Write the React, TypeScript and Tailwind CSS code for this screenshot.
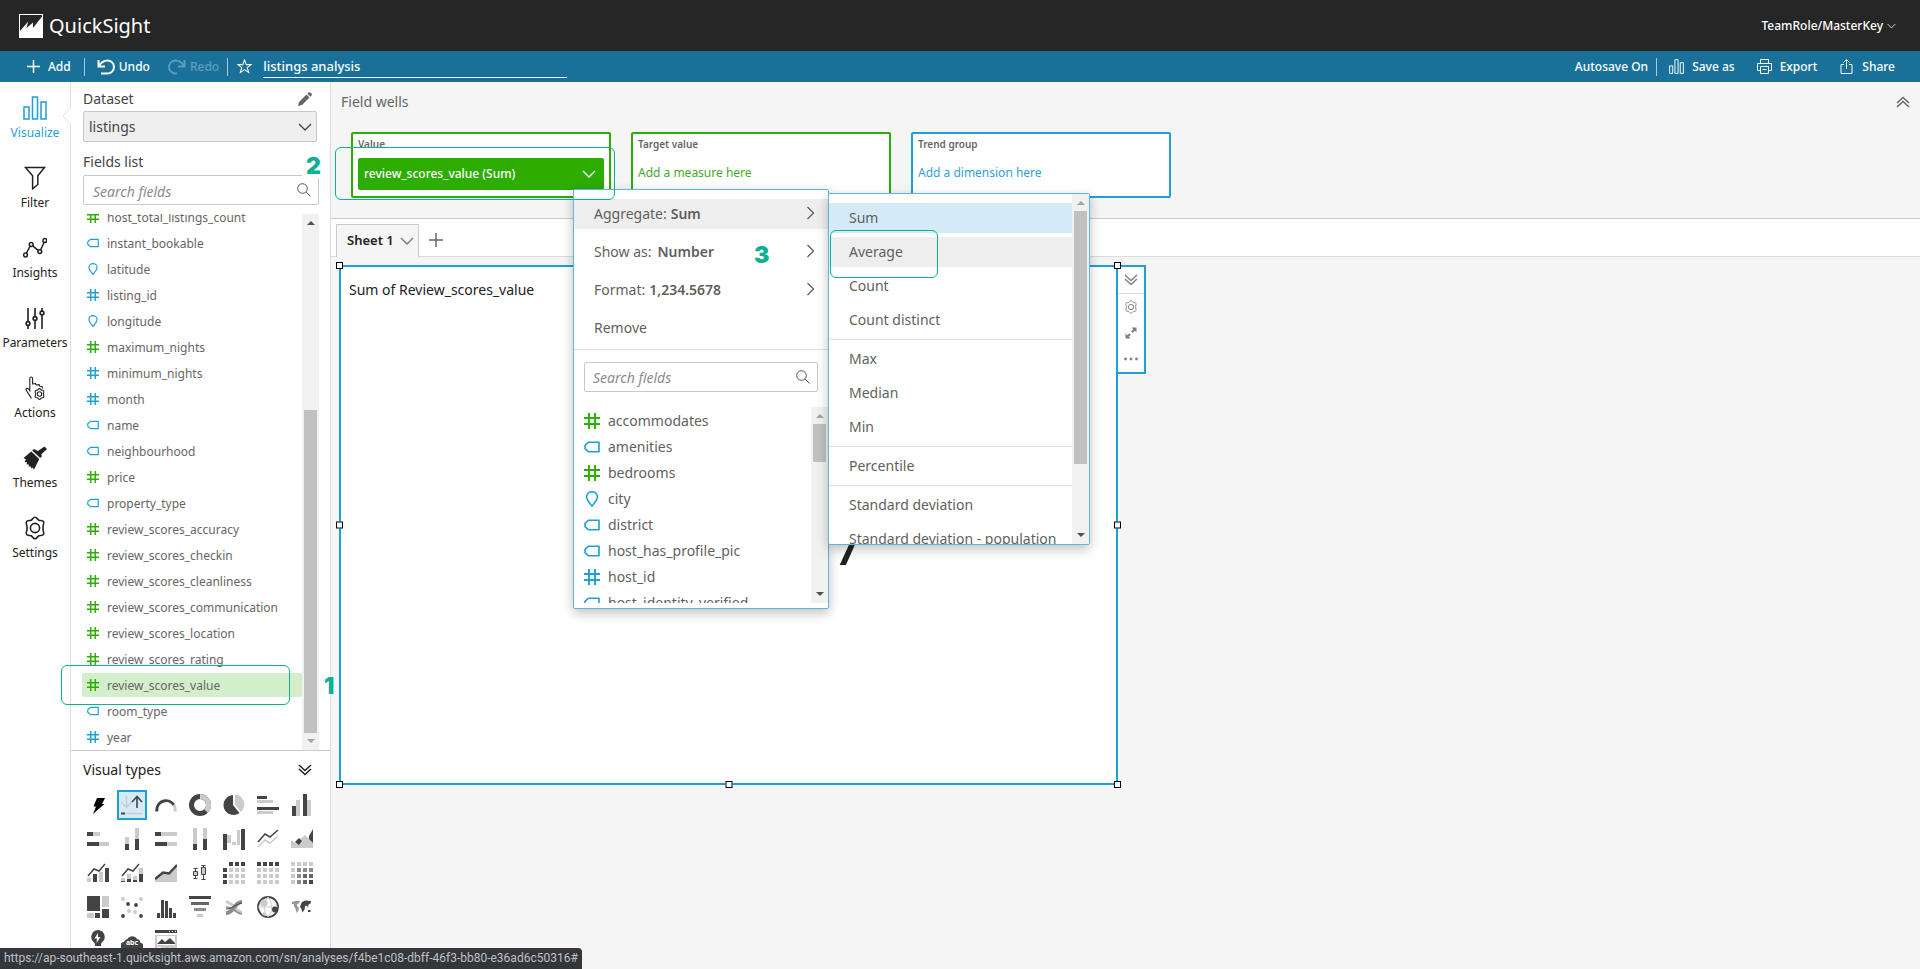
import React from 'react';

type FieldKind = 'measure' | 'number' | 'text' | 'geo';

interface Field {
  name: string;
  kind: FieldKind;
}

const fields: Field[] = [
  { name: 'host_total_listings_count', kind: 'measure' },
  { name: 'instant_bookable', kind: 'text' },
  { name: 'latitude', kind: 'geo' },
  { name: 'listing_id', kind: 'number' },
  { name: 'longitude', kind: 'geo' },
  { name: 'maximum_nights', kind: 'measure' },
  { name: 'minimum_nights', kind: 'number' },
  { name: 'month', kind: 'number' },
  { name: 'name', kind: 'text' },
  { name: 'neighbourhood', kind: 'text' },
  { name: 'price', kind: 'measure' },
  { name: 'property_type', kind: 'text' },
  { name: 'review_scores_accuracy', kind: 'measure' },
  { name: 'review_scores_checkin', kind: 'measure' },
  { name: 'review_scores_cleanliness', kind: 'measure' },
  { name: 'review_scores_communication', kind: 'measure' },
  { name: 'review_scores_location', kind: 'measure' },
  { name: 'review_scores_rating', kind: 'measure' },
  { name: 'review_scores_value', kind: 'measure' },
  { name: 'room_type', kind: 'text' },
  { name: 'year', kind: 'number' },
];

const menuFields: Field[] = [
  { name: 'accommodates', kind: 'measure' },
  { name: 'amenities', kind: 'text' },
  { name: 'bedrooms', kind: 'measure' },
  { name: 'city', kind: 'geo' },
  { name: 'district', kind: 'text' },
  { name: 'host_has_profile_pic', kind: 'text' },
  { name: 'host_id', kind: 'number' },
  { name: 'host_identity_verified', kind: 'text' },
];

const aggregates = [
  ['Sum', 'Average', 'Count', 'Count distinct'],
  ['Max', 'Median', 'Min'],
  ['Percentile'],
  ['Standard deviation', 'Standard deviation - population'],
];

const FieldIcon = ({ kind, className }: { kind: FieldKind; className: string }) => {
  if (kind === 'text') {
    return (
      <svg viewBox="0 0 16 16" className={`${className} text-[#1f9fd8]`} fill="none" stroke="currentColor" strokeWidth="1.6">
        <path d="M4.6 3.2H15v9.6H4.6L1 9.6V6.4z" strokeLinejoin="round" />
      </svg>
    );
  }
  if (kind === 'geo') {
    return (
      <svg viewBox="0 0 16 16" className={`${className} text-[#1f9fd8]`} fill="none" stroke="currentColor" strokeWidth="1.6">
        <path d="M8 15C5 11.5 2.6 8.8 2.6 5.9a5.4 5.2 0 0 1 10.8 0C13.4 8.8 11 11.5 8 15z" />
      </svg>
    );
  }
  return (
    <svg
      viewBox="0 0 16 16"
      className={`${className} ${kind === 'measure' ? 'text-[#2dad00]' : 'text-[#1f9fd8]'}`}
      fill="none"
      stroke="currentColor"
      strokeWidth="1.9"
    >
      <path d="M5 0v16M11 0v16M0 5h16M0 11h16" />
    </svg>
  );
};

const Chevron = ({ className }: { className: string }) => (
  <svg viewBox="0 0 14 8" className={className} fill="none" stroke="currentColor" strokeWidth="1.3">
    <path d="M1 1l6 6 6-6" />
  </svg>
);

const DoubleChevron = ({ className }: { className: string }) => (
  <svg viewBox="0 0 14 12" className={className} fill="none" stroke="currentColor" strokeWidth="1.5">
    <path d="M1 1l6 5.5L13 1M1 5l6 5.5L13 5" />
  </svg>
);

const SearchIcon = () => (
  <svg viewBox="0 0 14 14" className="h-[14px] w-[14px] shrink-0 text-[#555]" fill="none" stroke="currentColor">
    <circle cx="5.5" cy="5.5" r="4.8" />
    <path d="M9 9l4.5 4.5" />
  </svg>
);

const GearIcon = ({ className }: { className: string }) => (
  <svg viewBox="0 0 24 24" className={className} fill="none" stroke="currentColor" strokeWidth="1.6" strokeLinejoin="round">
    <path d="M12 1.3c1.8 0 2.5 2.2 3.9 2.9s3.7-.1 4.6 1.5c.9 1.5-.5 3.2-.5 4.8v3c0 1.6 1.4 3.3.5 4.8-.9 1.6-3.2.8-4.6 1.5s-2.1 2.900-3.900 2.900-2.500-2.200-3.900-2.900-3.700.1-4.600-1.500c-.9-1.500.5-3.200.5-4.800v-3c0-1.600-1.400-3.300-.5-4.800.9-1.600 3.200-.8 4.600-1.500S10.200 1.300 12 1.300z" />
    <circle cx="12" cy="12" r="4.6" />
  </svg>
);

const BarsIcon = ({ className }: { className: string }) => (
  <svg viewBox="0 0 24 24" className={className} fill="none" stroke="currentColor" strokeWidth="1.5">
    <path d="M1 11h5v12H1zM9.5 1h5v22h-5zM18 6h5v17h-5z" />
  </svg>
);

const railItems = [
  { label: 'Visualize', icon: <BarsIcon className="h-6 w-6" /> },
  {
    label: 'Filter',
    icon: (
      <svg viewBox="0 0 24 24" className="h-6 w-6" fill="none" stroke="currentColor" strokeWidth="1.5">
        <path d="M2.5 1.5h19l-6.7 8.3v8.7L9.6 22.8v-13z" />
      </svg>
    ),
  },
  {
    label: 'Insights',
    icon: (
      <svg viewBox="0 0 24 24" className="h-6 w-6" fill="none" stroke="currentColor" strokeWidth="1.5">
        <path d="M3.4 17.2L7.2 10M9.7 9.8l5.5 4.6M17.6 14l3.5-7.8" />
        <circle cx="2.5" cy="19" r="1.9" />
        <circle cx="8.2" cy="8.5" r="1.9" />
        <circle cx="16.8" cy="15.6" r="1.9" />
        <circle cx="21.8" cy="4.5" r="1.9" />
      </svg>
    ),
  },
  {
    label: 'Parameters',
    icon: (
      <svg viewBox="0 0 24 24" className="h-6 w-6" fill="none" stroke="currentColor" strokeWidth="1.6">
        <path d="M5 2v13.5M5 19.5V23M12 2v8.5M12 14.5V23M19 2v3M19 9v14" />
        <circle cx="5" cy="17.5" r="1.9" />
        <circle cx="12" cy="12.5" r="1.9" />
        <circle cx="19" cy="7" r="1.9" />
      </svg>
    ),
  },
  {
    label: 'Actions',
    icon: (
      <svg viewBox="0 0 24 24" className="h-6 w-6" fill="none" stroke="currentColor" strokeWidth="1.1">
        <path d="M8.5 22.5C6.5 19 4 16 3 13.5c0-1.2 1.6-1.7 2.6-.5l1.2 1.7V2.5c0-2 2.8-2 2.8 0v6M9.6 8l3-.5.5 1.5 3-.3.6 1.5 2.3.3.5 2" />
        <g transform="translate(10.5 12) scale(.5)" strokeWidth="2.2">
          <path d="M12 1.3c1.8 0 2.5 2.2 3.9 2.9s3.7-.1 4.6 1.5c.9 1.5-.5 3.2-.5 4.8v3c0 1.6 1.4 3.3.5 4.8-.9 1.6-3.2.8-4.6 1.5s-2.1 2.900-3.900 2.900-2.500-2.200-3.900-2.900-3.700.1-4.600-1.500c-.9-1.500.5-3.200.5-4.800v-3c0-1.600-1.400-3.300-.5-4.800.9-1.600 3.200-.8 4.600-1.500S10.200 1.300 12 1.300z" />
          <circle cx="12" cy="12" r="4.5" />
        </g>
      </svg>
    ),
  },
  {
    label: 'Themes',
    icon: (
      <svg viewBox="0 0 24 24" className="h-6 w-6" fill="currentColor">
        <path d="M21.5.5L24 3l-5.8 5.5.8 1.8-1.8 1.7-8-7.5L11 3l2 .9 1.9 1.2zM8.3 5.5l8 7.5L11 23.500l-1.600-2-1 1-.9-2.300-1.800.6.1-2.400-2.300-.1.5-2L1.500 16 3 13.500.5 12z" />
      </svg>
    ),
  },
  { label: 'Settings', icon: <GearIcon className="h-6 w-6" /> },
];

const D = '#444444';
const M = '#8c8c8c';
const L = '#cbcbcb';

type Bar = [number, number, number, number, string];

const Bars = ({ bars }: { bars: Bar[] }) => (
  <>
    {bars.map(([x, y, w, h, fill], i) => (
      <rect key={i} x={x} y={y} width={w} height={h} fill={fill} />
    ))}
  </>
);

const Cells = ({ rows }: { rows: string[] }) => {
  const shades: Record<string, string> = { d: D, k: '#666666', m: M, l: L, x: 'none' };
  return (
    <>
      {rows.map((row, y) =>
        row.split('').map((c, x) => (
          <rect key={`${x}-${y}`} x={x * 6} y={y * 6} width="4" height="4" fill={shades[c]} />
        ))
      )}
    </>
  );
};

const visualTypes: { label: string; art: React.ReactNode }[] = [
  { label: 'AutoGraph', art: <path d="M10 4h8l-3 6h2.5L6 20l3-7.5H6.5z" fill="#000" /> },
  {
    label: 'KPI',
    art: (
      <g fill="none">
        <path d="M5.5 2v11M.5 8l5 5.5 5-5.5" stroke={L} strokeWidth="1.5" />
        <path d="M16 14V3M11 8l5-5.5L21 8" stroke={D} strokeWidth="1.6" />
        <path d="M4 19.5h18" stroke={L} strokeWidth="1.5" />
        <path d="M0 19.5h4" stroke={D} strokeWidth="2" />
      </g>
    ),
  },
  {
    label: 'Gauge chart',
    art: (
      <g fill="none" strokeWidth="3">
        <path d="M1.8 17.5v-2a9.2 9.2 0 0 1 17-4.5" stroke={D} />
        <path d="M18.8 11a9 9 0 0 1 1.4 4.5v2" stroke={L} />
      </g>
    ),
  },
  {
    label: 'Donut chart',
    art: (
      <g fill="none" strokeWidth="5">
        <circle cx="11" cy="11" r="8.5" stroke={D} />
        <path d="M11 2.5a8.5 8.5 0 0 1 6 14.5" stroke={L} />
      </g>
    ),
  },
  {
    label: 'Pie chart',
    art: (
      <>
        <path d="M10 1a10 10 0 1 0 6.5 18L10 11z" fill={D} />
        <path d="M12 .5a10 10 0 0 1 5.8 17.5L12 10.5z" fill={L} />
      </>
    ),
  },
  { label: 'Horizontal bar chart', art: <Bars bars={[[0, 2, 10, 3, D], [0, 6, 16, 3, L], [0, 13, 22, 3, D], [0, 17, 16, 3, L]]} /> },
  { label: 'Vertical bar chart', art: <Bars bars={[[1, 12, 4, 10, D], [5, 6, 4, 16, L], [12, 0, 4, 22, D], [16, 6, 4, 16, L]]} /> },
  { label: 'Horizontal stacked bar chart', art: <Bars bars={[[0, 4, 6, 4, D], [6, 4, 7, 4, L], [0, 14, 12, 4, D], [12, 14, 10, 4, L]]} /> },
  { label: 'Vertical stacked bar chart', art: <Bars bars={[[4, 9, 4, 7, L], [4, 16, 4, 6, D], [14, 0, 4, 11, L], [14, 11, 4, 11, D]]} /> },
  { label: 'Horizontal stacked 100% bar chart', art: <Bars bars={[[0, 4, 6, 4, D], [6, 4, 16, 4, L], [0, 14, 12, 4, D], [12, 14, 10, 4, L]]} /> },
  { label: 'Vertical stacked 100% bar chart', art: <Bars bars={[[4, 0, 4, 16, L], [4, 16, 4, 6, D], [14, 0, 4, 11, L], [14, 11, 4, 11, D]]} /> },
  { label: 'Waterfall chart', art: <Bars bars={[[0, 6, 4, 16, D], [4, 7, 4, 8, L], [9, 14, 4, 3, L], [14, 2, 3, 15, L], [18, 1, 4, 21, D]]} /> },
  {
    label: 'Line chart',
    art: (
      <g fill="none" strokeWidth="1.5">
        <path d="M1 14l7-8 5 3 8-7" stroke={D} />
        <path d="M1 19l7-7 5 3 8-7" stroke={L} />
      </g>
    ),
  },
  {
    label: 'Area line chart',
    art: (
      <>
        <path d="M0 20v-8l4 3 4-3 6-5 4 4 4 2v7z" fill={L} />
        <path d="M4 14l4-4 3 3-3 4zM22 1l-4 7v3l4 4z" fill={D} />
      </>
    ),
  },
  {
    label: 'Clustered bar combo chart',
    art: (
      <>
        <Bars bars={[[0, 16, 4, 4, L], [6, 12, 4, 8, D], [12, 10, 4, 10, L], [18, 6, 4, 14, D]]} />
        <path d="M1 14l6-7 5 2 6-7" fill="none" stroke={D} strokeWidth="1.5" />
      </>
    ),
  },
  {
    label: 'Stacked bar combo chart',
    art: (
      <>
        <Bars bars={[[0, 16, 4, 3, L], [0, 19, 4, 1, D], [6, 12, 4, 5, L], [6, 17, 4, 3, D], [12, 14, 4, 4, L], [12, 18, 4, 2, D], [18, 6, 4, 7, L], [18, 12, 4, 8, D]]} />
        <path d="M1 14l6-7 5 2 6-7" fill="none" stroke={D} strokeWidth="1.5" />
      </>
    ),
  },
  {
    label: 'Stacked area line chart',
    art: (
      <>
        <path d="M0 20v-3l7-6 7 1 8-8v16z" fill={L} />
        <path d="M0 17l8-6.5 6 1L22 3" fill="none" stroke={D} strokeWidth="2.5" />
      </>
    ),
  },
  {
    label: 'Box plot',
    art: (
      <g fill={L} stroke={D} strokeWidth="1">
        <path d="M6.5 6v11M14.5 3v15M4.5 6.5h4M4.5 16.5h4M12.5 3.5h4M12.5 17.5h4" />
        <path d="M4.5 9.5h4v4h-4zM12.5 5.5h4v7h-4z" />
      </g>
    ),
  },
  { label: 'Pivot table', art: <Cells rows={['xddd', 'dlll', 'dlll', 'dlll']} /> },
  { label: 'Table', art: <Cells rows={['dddd', 'llll', 'llll', 'llll']} /> },
  { label: 'Heat map', art: <Cells rows={['llll', 'lmmm', 'lmkk', 'lmkd']} /> },
  { label: 'Tree map', art: <Bars bars={[[0, 0, 13, 15, D], [15, 0, 7, 11, L], [0, 17, 7, 5, L], [8, 17, 5, 5, D], [15, 13, 7, 9, D]]} /> },
  {
    label: 'Scatter plot',
    art: (
      <>
        {[[2, 3], [20, 3], [8, 15], [14, 16]].map(([x, y]) => (
          <circle key={`${x}-${y}`} cx={x} cy={y} r="1.9" fill={L} />
        ))}
        {[[7, 8], [15, 9], [2, 20], [20, 20]].map(([x, y]) => (
          <circle key={`${x}-${y}`} cx={x} cy={y} r="1.9" fill={D} />
        ))}
      </>
    ),
  },
  { label: 'Histogram', art: <Bars bars={[[2, 17, 3, 5, D], [6, 4, 3, 18, D], [10, 5, 3, 17, D], [14, 12, 3, 10, D], [18, 17, 3, 5, D]]} /> },
  { label: 'Funnel chart', art: <Bars bars={[[0, 0, 22, 3, D], [2, 6, 18, 3, '#666666'], [5, 12, 12, 3, M], [8, 18, 6, 3, L]]} /> },
  {
    label: 'Sankey diagram',
    art: (
      <g fill="none">
        <path d="M3 6c8 0 8 10 16 10" stroke={L} strokeWidth="3" />
        <path d="M3 11c8 0 8 6 16 7" stroke={M} strokeWidth="1.5" />
        <path d="M3 17C11 17 11 6 19 6" stroke={M} strokeWidth="4" />
        <path d="M3 13c7 0 9-5 16-6" stroke={D} strokeWidth="1" />
      </g>
    ),
  },
  {
    label: 'Points on map',
    art: (
      <>
        <circle cx="11" cy="11" r="10" fill="none" stroke={D} strokeWidth="1.8" />
        <path d="M1 11h20M11 1c-5 6-5 14 0 20M11 1c5 6 5 14 0 20" fill="none" stroke={L} strokeWidth="1" />
        <circle cx="7" cy="7" r="3.6" fill={L} />
        <circle cx="7" cy="18" r="1.7" fill={L} />
        <circle cx="18" cy="13.5" r="3" fill={D} />
      </>
    ),
  },
  {
    label: 'Filled map',
    art: (
      <>
        <path d="M1 6l3-1h5l-1 2-2 1.5V10l2 1.5-.5 3-2 2.5-1-4.5-1.5-2V8L1 8z" fill="#999" />
        <path d="M10 8l1-2 3-1.5 6 .5-.5 2.5-2 1-.5 2.5-2-1.5-1 1-.5 3-2 3-1-3.5L9 11zM17 14h2.5v2H17z" fill={D} />
      </>
    ),
  },
  {
    label: 'Insight',
    art: (
      <>
        <path d="M11 0a7 7 0 0 0-4 12.5c.8.7 1 1.5 1 3.5h6c0-2 .2-2.8 1-3.5A7 7 0 0 0 11 0z" fill={D} />
        <path d="M11 3L7.5 8.500H10L9.500 13l4-6H11z" fill="#fff" />
      </>
    ),
  },
  {
    label: 'Word cloud',
    art: (
      <>
        <path d="M4 20a4 4 0 0 1-1-8 4 4 0 0 1 3.5-3A5.5 5.5 0 0 1 16 9a4.5 4.5 0 0 1 3.5 4A3.5 3.5 0 0 1 19 20z" fill={D} />
        <text x="11" y="15" fontSize="7" fontWeight="700" textAnchor="middle" fill="#fff">abc</text>
      </>
    ),
  },
  {
    label: 'Custom visual content',
    art: (
      <>
        <Bars bars={[[0, 0, 22, 3, D], [0, 5, 22, 17, L], [2, 6, 18, 9, '#ffffff'], [2, 17, 4, 3, '#ffffff'], [14, 1, 1, 1, '#ffffff'], [17, 1, 1, 1, '#ffffff'], [20, 1, 1, 1, '#ffffff']]} />
        <path d="M2 14l5-5 3 3 5-4 5 5v1z" fill={D} />
      </>
    ),
  },
];

const Scrollbar = ({ thumb, upActive }: { thumb: string; upActive?: boolean }) => (
  <div className="relative flex w-[17px] shrink-0 flex-col items-center justify-between bg-[#f1f1f1] py-[7px]">
    <svg viewBox="0 0 8 4" className={upActive ? 'h-1 w-2 fill-[#505050]' : 'h-1 w-2 fill-[#a3a3a3]'}>
      <path d="M0 4l4-4 4 4z" />
    </svg>
    <div className={`absolute left-[2px] w-[13px] bg-[#c1c1c1] ${thumb}`} />
    <svg viewBox="0 0 8 4" className={upActive ? 'h-1 w-2 fill-[#a3a3a3]' : 'h-1 w-2 fill-[#505050]'}>
      <path d="M0 0l4 4 4-4z" />
    </svg>
  </div>
);

const Header = () => (
  <header className="flex h-[51px] items-center justify-between bg-[#262626] pl-[19px] pr-6 text-white">
    <div className="flex items-center gap-[6px]">
      <svg viewBox="0 0 24 24" className="h-6 w-6">
        <path d="M0 0h24v24H0z" fill="#fff" />
        <path d="M1 1h22v1.5L14 14V8.5L7.5 14l1.7-6.5L1 17z" fill="#262626" />
      </svg>
      <span className="text-[20px] leading-6">QuickSight</span>
    </div>
    <button className="flex items-center gap-1 text-[12px] font-medium">
      TeamRole/MasterKey
      <Chevron className="h-[6px] w-[9px]" />
    </button>
  </header>
);

const Toolbar = () => (
  <div className="flex h-[31px] items-center justify-between bg-[#19719a] pl-[27px] pr-[25px] text-[12px] font-medium text-white">
    <div className="flex items-center">
      <button className="flex items-center gap-2">
        <svg viewBox="0 0 13 13" className="h-[13px] w-[13px]" stroke="currentColor" strokeWidth="1.5">
          <path d="M6.5 0v13M0 6.5h13" />
        </svg>
        Add
      </button>
      <div className="ml-[13px] mr-3 h-[18px] w-px bg-[#a9c9d9]" />
      <button className="flex items-center gap-1">
        <svg viewBox="0 0 18 16" className="h-4 w-[18px]" fill="none" stroke="currentColor" strokeWidth="2">
          <path d="M1.5 1v6.5H8M2 7C4 3.5 7 1.5 10.5 1.5a6.5 6.5 0 1 1 0 13H4" />
        </svg>
        Undo
      </button>
      <button className="ml-[18px] flex items-center gap-1 opacity-30" disabled>
        <svg viewBox="0 0 18 16" className="h-4 w-[18px]" fill="none" stroke="currentColor" strokeWidth="2">
          <path d="M16.5 1v6.5H10M16 7C14 3.5 11 1.5 7.5 1.5a6.5 6.5 0 1 0 0 13H9" />
        </svg>
        Redo
      </button>
      <div className="ml-2 mr-[9px] h-[18px] w-px bg-[#a9c9d9]" />
      <button aria-label="Add to favorites">
        <svg viewBox="0 0 16 16" className="h-[15px] w-[15px]" fill="none" stroke="currentColor" strokeWidth="1.1">
          <path d="M8 1l1.9 5H15l-4.1 3.2 1.6 5.3L8 11.4l-4.5 3.1 1.6-5.3L1 6h5.1z" />
        </svg>
      </button>
      <input
        aria-label="Analysis name"
        defaultValue="listings analysis"
        className="ml-[11px] h-[22px] w-[304px] border-b border-white bg-transparent text-[13px] font-medium outline-none"
      />
    </div>
    <div className="flex items-center">
      <span>Autosave On</span>
      <div className="ml-2 mr-3 h-[18px] w-px bg-[#a9c9d9]" />
      <button className="flex items-center gap-2">
        <BarsIcon className="h-[15px] w-[15px]" />
        Save as
      </button>
      <button className="ml-[22px] flex items-center gap-2">
        <svg viewBox="0 0 15 15" className="h-[15px] w-[15px]" fill="none" stroke="currentColor">
          <path d="M3.5 4V.5h8V4M3.5 11.5h-3v-7h14v7h-3M3.5 7.5h8v7h-8zM5.5 10.5h4" />
        </svg>
        Export
      </button>
      <button className="ml-[22px] flex items-center gap-2">
        <svg viewBox="0 0 15 15" className="h-[15px] w-[15px]" fill="none" stroke="currentColor">
          <path d="M5 5.5H2v9h11v-9h-3M7.5 10V1M4.5 3.5l3-3 3 3" />
        </svg>
        Share
      </button>
    </div>
  </div>
);

const Rail = () => (
  <nav className="relative w-[71px] shrink-0 border-r border-[#e0e0e0] bg-white">
    {railItems.map((item, i) => (
      <button
        key={item.label}
        className={`flex h-[70px] w-full flex-col items-center gap-[5px] pt-[14px] text-[12px] leading-[16px] ${
          i === 0 ? 'text-[#1f9fd8]' : 'text-[#222]'
        }`}
      >
        {item.icon}
        {item.label}
      </button>
    ))}
    {/* notch that points at the selected section */}
    <svg viewBox="0 0 9 18" className="absolute -right-px top-[25px] h-[18px] w-[9px]">
      <path d="M9 0L1 9l8 9z" fill="#fff" />
      <path d="M8.5.5L1 9l7.5 8.5" fill="none" stroke="#e0e0e0" />
    </svg>
  </nav>
);

const SidePanel = () => (
  <aside className="flex w-[260px] shrink-0 flex-col border-r border-[#ddd] bg-white">
    <div className="px-3 pt-[6px]">
      <div className="flex items-center justify-between text-[14px] leading-[22px] text-[#444]">
        <label htmlFor="dataset">Dataset</label>
        <button aria-label="Edit dataset" className="mr-[6px]">
          <svg viewBox="0 0 14 14" className="h-[14px] w-[14px]" fill="#666">
            <path d="M0 14l1-4 7.5-7.5 3 3L4 13zM9.3 1.7L10.5.5Q11.5-.3 13 1t.5 2.5L12.3 4.7z" />
          </svg>
        </button>
      </div>
      <div className="relative mt-px w-[234px]">
        <select
          id="dataset"
          className="h-[31px] w-full appearance-none rounded-xs border border-[#c8c8c8] bg-[#eee] pl-[5px] text-[14px] text-[#444]"
        >
          <option>listings</option>
        </select>
        <Chevron className="pointer-events-none absolute right-[5px] top-[12px] h-2 w-[14px] text-[#444]" />
      </div>
      <label htmlFor="field-search" className="mt-[9px] block text-[14px] leading-[22px] text-[#444]">
        Fields list
      </label>
      <div className="mt-[2px] flex h-[30px] w-[236px] items-center rounded-xs border border-[#c8c8c8] pr-[7px] pl-[9px]">
        <input
          id="field-search"
          placeholder="Search fields"
          className="min-w-0 flex-1 pt-[2px] text-[14px] italic outline-none placeholder:text-[#8c8c8c]"
        />
        <SearchIcon />
      </div>
    </div>
    <div className="mt-[9px] flex min-h-0 flex-1 border-b border-[#ccc] pr-[11px] pl-[11px]">
      <ul className="flex min-w-0 flex-1 flex-col justify-end overflow-hidden">
        {fields.map((field) => (
          <li
            key={field.name}
            className={`my-px flex h-6 shrink-0 items-center gap-2 rounded-xs pl-[5px] text-[12px] text-[#666] ${
              field.name === 'review_scores_value' ? 'bg-[#d3eecb]' : ''
            }`}
          >
            <FieldIcon kind={field.kind} className="h-3 w-3" />
            <span className="pt-[2px]">{field.name}</span>
          </li>
        ))}
      </ul>
      <Scrollbar thumb="top-[196px] bottom-[17px]" upActive />
    </div>
    <div className="h-[218px] shrink-0 overflow-hidden px-[10px]">
      <div className="flex h-[37px] items-center justify-between pr-2 pl-[2px] text-[14px] text-[#222]">
        Visual types
        <button aria-label="Collapse visual types">
          <DoubleChevron className="h-3 w-[14px]" />
        </button>
      </div>
      <div className="grid w-[238px] grid-cols-7">
        {visualTypes.map((v) => (
          <button
            key={v.label}
            aria-label={v.label}
            className={`m-[2px] flex h-[30px] w-[30px] items-center justify-center ${
              v.label === 'KPI' ? 'border-2 border-[#1f9fd8] bg-[#d4ebf7]' : ''
            }`}
          >
            <svg viewBox="0 0 22 22" className="h-[22px] w-[22px] shrink-0">
              {v.art}
            </svg>
          </button>
        ))}
      </div>
    </div>
  </aside>
);

const AggregateMenu = () => (
  <div className="absolute left-[254px] top-[3px] z-10 flex h-[352px] w-[262px] rounded-xs border border-[#5db5e0] bg-white shadow-[0_4px_12px_rgba(0,0,0,0.25)]">
    <div className="min-w-0 flex-1 overflow-hidden pt-[9px]">
      {aggregates.map((group, i) => (
        <div key={group[0]} className={`flex flex-col gap-1 ${i > 0 ? 'mt-1 border-t border-[#e0e0e0] pt-1' : ''}`}>
          {group.map((name) => (
            <button
              key={name}
              className={`h-[30px] shrink-0 pb-[2px] pl-5 text-left whitespace-nowrap ${
                name === 'Sum' ? 'bg-[#d4ebf7]' : name === 'Average' ? 'bg-[#eee]' : ''
              }`}
            >
              {name}
            </button>
          ))}
        </div>
      ))}
    </div>
    <Scrollbar thumb="top-[17px] h-[253px]" />
  </div>
);

const menuRows = [
  { label: 'Aggregate:', value: 'Sum', gap: 'gap-1' },
  { label: 'Show as:', value: 'Number', gap: 'gap-[6px]' },
  { label: 'Format:', value: '1,234.5678', gap: 'gap-1' },
];

const FieldMenu = () => (
  <div className="absolute left-[220px] top-[55px] z-20 flex h-[420px] w-[256px] flex-col rounded-xs border border-[#5db5e0] bg-white pt-[9px] text-[14px] text-[#5f5f5f] shadow-[0_4px_12px_rgba(0,0,0,0.25)]">
    <div className="flex flex-col gap-2 border-b border-[#e0e0e0] pb-[6px]">
      {menuRows.map((row, i) => (
        <button
          key={row.label}
          className={`flex h-[30px] items-center justify-between pr-[14px] pb-[2px] pl-5 ${i === 0 ? 'bg-[#eee]' : ''}`}
        >
          <span className={`flex ${row.gap}`}>
            {row.label} <b className="font-semibold">{row.value}</b>
          </span>
          <svg viewBox="0 0 7 14" className="h-[14px] w-[7px]" fill="none" stroke="currentColor" strokeWidth="1.3">
            <path d="M.5 1l6 6-6 6" />
          </svg>
        </button>
      ))}
      <button className="h-[30px] pb-[2px] pl-5 text-left">Remove</button>
    </div>
    <div className="mx-[10px] mt-3 flex h-[30px] shrink-0 items-center rounded-xs border border-[#c8c8c8] pr-[7px] pl-2">
      <input
        aria-label="Search fields"
        placeholder="Search fields"
        className="min-w-0 flex-1 text-[14px] italic outline-none placeholder:text-[#8c8c8c]"
      />
      <SearchIcon />
    </div>
    <div className="mt-[15px] mb-[5px] flex min-h-0 flex-1">
      <ul className="min-w-0 flex-1 overflow-hidden pl-[10px]">
        {menuFields.map((field) => (
          <li key={field.name} className="flex h-[26px] items-center gap-2 pt-[2px]">
            <FieldIcon kind={field.kind} className="h-4 w-4" />
            <span className="pb-[2px]">{field.name}</span>
          </li>
        ))}
      </ul>
      <Scrollbar thumb="top-[17px] h-[38px]" />
    </div>
    <AggregateMenu />
  </div>
);

const Handle = ({ className }: { className: string }) => (
  <span className={`absolute h-[7px] w-[7px] border border-black bg-white ${className}`} />
);

const FieldWells = () => (
  <section className="h-[137px] shrink-0 border-b border-[#ccc]">
    <div className="flex items-center justify-between pt-[9px] pr-[10px] pl-[10px] text-[14px] leading-[22px] text-[#666]">
      Field wells
      <button aria-label="Collapse field wells">
        <DoubleChevron className="h-3 w-[14px] rotate-180" />
      </button>
    </div>
    <div className="mt-[19px] flex gap-5 pl-5 text-[12px]">
      <div className="relative h-[66px] w-[260px] rounded-xs border-2 border-[#2dad00] bg-white px-[5px] pt-[3px]">
        <div className="text-[10px] leading-[14px] font-semibold text-[#666]">Value</div>
        <button className="mt-[7px] flex h-8 w-full items-center justify-between rounded-xs bg-[#2dad00] pr-2 pl-[6px] font-medium text-white">
          review_scores_value (Sum)
          <Chevron className="h-2 w-[14px]" />
        </button>
        <FieldMenu />
      </div>
      <div className="h-[66px] w-[260px] rounded-xs border-2 border-[#2dad00] bg-white px-[5px] pt-[3px]">
        <div className="text-[10px] leading-[14px] font-semibold text-[#666]">Target value</div>
        <div className="mt-[13px] leading-[18px] text-[#45a82a]">Add a measure here</div>
      </div>
      <div className="h-[66px] w-[260px] rounded-xs border-2 border-[#1f9fd8] bg-white px-[5px] pt-[3px]">
        <div className="text-[10px] leading-[14px] font-semibold text-[#666]">Trend group</div>
        <div className="mt-[13px] leading-[18px] text-[#2f9fd6]">Add a dimension here</div>
      </div>
    </div>
  </section>
);

const Sheet = () => (
  <section>
    <div className="flex h-[38px] items-end border-b border-[#ddd] bg-white pl-[5px]">
      <button className="-mb-px flex h-[33px] w-[83px] items-center justify-between border border-b-0 border-[#ccc] bg-[#f5f5f5] pr-1 pl-[10px] text-[13px] font-semibold text-[#222]">
        Sheet 1
        <Chevron className="h-2 w-[14px] text-[#777]" />
      </button>
      <button aria-label="Add sheet" className="mb-[9px] ml-[10px]">
        <svg viewBox="0 0 14 14" className="h-[14px] w-[14px]" stroke="#666" strokeWidth="1.5">
          <path d="M7 0v14M0 7h14" />
        </svg>
      </button>
    </div>
    <div className="flex items-start pt-2 pl-2">
      <div className="relative h-[520px] w-[779px] border-2 border-[#1f9fd8] bg-white pt-[12px] pl-2">
        <h2 className="text-[14px] leading-[22px] text-[#222]">Sum of Review_scores_value</h2>
        <p className="mt-[205px] pl-[482px] text-[64px] leading-[70px] text-[#222]">7</p>
        <Handle className="-left-[5px] -top-[5px]" />
        <Handle className="-left-[5px] top-1/2 -translate-y-1/2" />
        <Handle className="-left-[5px] -bottom-[5px]" />
        <Handle className="-right-[5px] -top-[5px]" />
        <Handle className="-right-[5px] top-1/2 -translate-y-1/2" />
        <Handle className="-right-[5px] -bottom-[5px]" />
        <Handle className="-bottom-[5px] left-1/2 -translate-x-1/2" />
      </div>
      <div className="flex w-[28px] flex-col items-center border-2 border-l-0 border-[#1f9fd8] bg-white text-[#808080]">
        <button aria-label="Collapse" className="flex h-[27px] w-full items-center justify-center border-b border-[#ddd]">
          <DoubleChevron className="h-3 w-[14px]" />
        </button>
        <button aria-label="Format visual" className="flex h-[26px] items-center">
          <GearIcon className="h-[14px] w-[14px]" />
        </button>
        <button aria-label="Maximize" className="flex h-[26px] items-center">
          <svg viewBox="0 0 12 12" className="h-3 w-3" fill="currentColor">
            <path d="M6.5.5h5v5L9.8 3.8 7.7 6 6.2 4.5l2-2.200zM.5 6.500v5h5L3.800 9.800l2-2L4.300 6.200l-2 2z" />
          </svg>
        </button>
        <button aria-label="More options" className="flex h-[26px] items-center">
          <svg viewBox="0 0 14 4" className="h-1 w-[14px]" fill="currentColor">
            <circle cx="1.5" cy="2" r="1.4" />
            <circle cx="7" cy="2" r="1.4" />
            <circle cx="12.5" cy="2" r="1.4" />
          </svg>
        </button>
      </div>
    </div>
  </section>
);

/* Tutorial callouts drawn over the page */
const Callouts = () => (
  <div className="pointer-events-none text-[23px] leading-6 font-black text-[#0cb092]">
    <div className="absolute left-[61px] top-[665px] z-30 h-10 w-[229px] rounded-md border border-current" />
    <div className="absolute left-[335px] top-[147px] z-30 h-[53px] w-[280px] rounded-md border border-current" />
    <div className="absolute left-[830px] top-[230px] z-30 h-12 w-[108px] rounded-md border border-current" />
    <span className="absolute left-[324px] top-[674px] z-30 font-[Inter] [text-shadow:0_0_3px_#fff,0_0_3px_#fff,0_0_3px_#fff]">1</span>
    <span className="absolute left-[302px] top-[154px] z-30 bg-white px-1 font-[Inter]">2</span>
    <span className="absolute left-[754px] top-[243px] z-30 font-[Inter]">3</span>
  </div>
);

const App = () => {
  return (
    <div className="relative flex h-screen flex-col overflow-hidden bg-[#f5f5f5] font-['Noto_Sans',sans-serif]">
      <Header />
      <Toolbar />
      <div className="flex min-h-0 flex-1">
        <Rail />
        <SidePanel />
        <main className="min-w-0 flex-1">
          <FieldWells />
          <Sheet />
        </main>
      </div>
      <Callouts />
      <div className="absolute bottom-0 left-0 z-40 h-[21px] rounded-tr bg-[#35363a] pr-1 pl-1 font-[Roboto] text-[12px] leading-[21px] text-[#bdc1c6]">
        https://ap-southeast-1.quicksight.aws.amazon.com/sn/analyses/f4be1c08-dbff-46f3-bb80-e36ad6c50316#
      </div>
    </div>
  );
};

export default App;
